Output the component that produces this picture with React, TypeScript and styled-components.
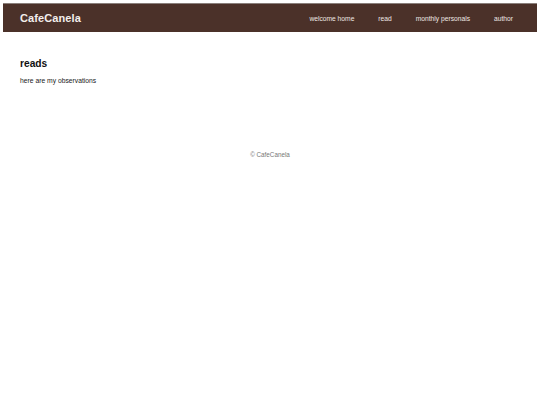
import { createGlobalStyle, styled } from "styled-components";

const GlobalStyle = createGlobalStyle`
  html, body {
    margin: 0;
    padding: 0;
    background: #ffffff;
    font-family: "Liberation Sans", Arial, sans-serif;
    color: #111111;
  }
`;

const Page = styled.div`
  padding: 3px;
`;

const Header = styled.header`
  display: flex;
  align-items: center;
  justify-content: space-between;
  height: 29px;
  padding: 0 12px 0 17px;
  background-color: #4b3129;
  border-top: 1px solid #8a7f7b;
  box-sizing: border-box;
`;

const Logo = styled.div`
  color: #f3eeec;
  font-weight: 700;
  font-size: 11px;
  letter-spacing: 0.1px;
`;

const Nav = styled.nav`
  display: flex;
  align-items: center;
`;

const NavLink = styled.a`
  color: #efe8e5;
  font-size: 6.7px;
  padding: 0 12px;
  text-decoration: none;
  cursor: pointer;
`;

const Main = styled.main`
  padding: 26px 17px 0;
`;

const Title = styled.h1`
  margin: 0;
  font-size: 10.2px;
  line-height: 12px;
  font-weight: 700;
  color: #111111;
`;

const Intro = styled.p`
  margin: 6px 0 0;
  font-size: 6.75px;
  line-height: 9px;
  color: #1a1a1a;
`;

const Footer = styled.footer`
  margin-top: 65px;
  text-align: center;
  font-size: 6.3px;
  line-height: 9px;
  color: #777777;
`;

const links = ["welcome home", "read", "monthly personals", "author"];

export default function App() {
  return (
    <Page>
      <GlobalStyle />
      <Header>
        <Logo>CafeCanela</Logo>
        <Nav>
          {links.map((l) => (
            <NavLink key={l}>{l}</NavLink>
          ))}
        </Nav>
      </Header>
      <Main>
        <Title>reads</Title>
        <Intro>here are my observations</Intro>
      </Main>
      <Footer>© CafeCanela</Footer>
    </Page>
  );
}
